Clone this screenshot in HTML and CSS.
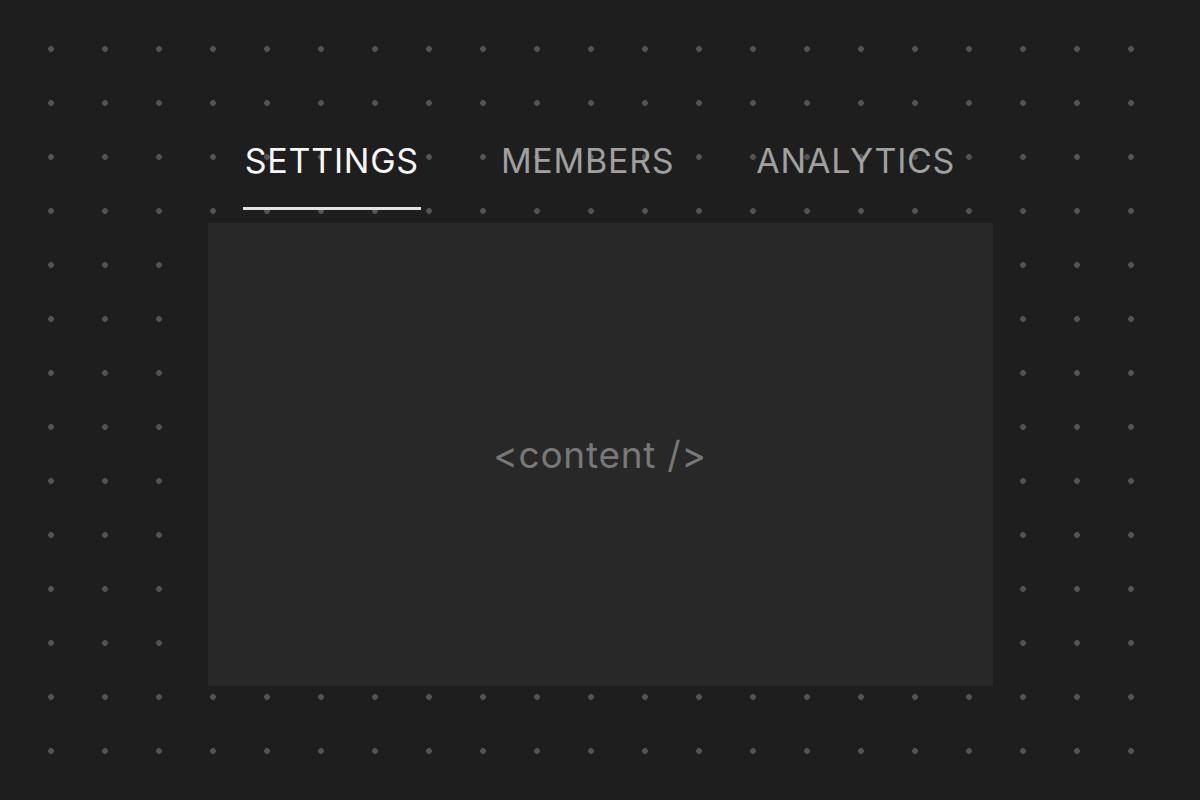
FILE: index.html
```html
<!DOCTYPE html>
<html lang="en">
<head>
<meta charset="utf-8">
<title>Tabs</title>
<link rel="stylesheet" href="styles.css">
</head>
<body>
  <div class="stage">
    <nav class="tabs">
      <div class="tab tab-active">SETTINGS</div>
      <div class="tab">MEMBERS</div>
      <div class="tab">ANALYTICS</div>
    </nav>
    <section class="panel">
      <span class="panel-text">&lt;content /&gt;</span>
    </section>
  </div>
</body>
</html>
```
FILE: styles.css
```css
html, body {
  margin: 0;
  padding: 0;
  background: #1e1e1e;
}

body {
  width: 1200px;
  height: 800px;
  overflow: hidden;
  font-family: Inter, "Noto Sans", sans-serif;
}

.stage {
  position: relative;
  box-sizing: border-box;
  width: 1200px;
  height: 800px;
  padding-top: 141px;
  display: flex;
  flex-direction: column;
  align-items: center;
}

.stage::before {
  content: "";
  position: absolute;
  left: 24px;
  top: 22px;
  width: 1134px;
  height: 756px;
  background-image: radial-gradient(circle at 27px 27px, #545454 0, #545454 2.5px, transparent 3.2px);
  background-size: 54px 54px;
  z-index: 0;
}

.tabs {
  position: relative;
  z-index: 1;
  display: flex;
  gap: 78px;
}

.tab {
  font-size: 34px;
  line-height: 40px;
  letter-spacing: 0.022em;
  color: #a0a0a0;
  padding: 0 2px 26px;
  border-bottom: 3px solid transparent;
}

.tab-active {
  color: #f7f7f7;
  border-bottom-color: #e2e2e2;
}

.panel {
  position: relative;
  z-index: 1;
  margin-top: 13px;
  width: 785px;
  height: 463px;
  background: #282828;
  display: flex;
  align-items: center;
  justify-content: center;
}

.panel-text {
  font-size: 37px;
  color: #787878;
  letter-spacing: 0.02em;
}
```
